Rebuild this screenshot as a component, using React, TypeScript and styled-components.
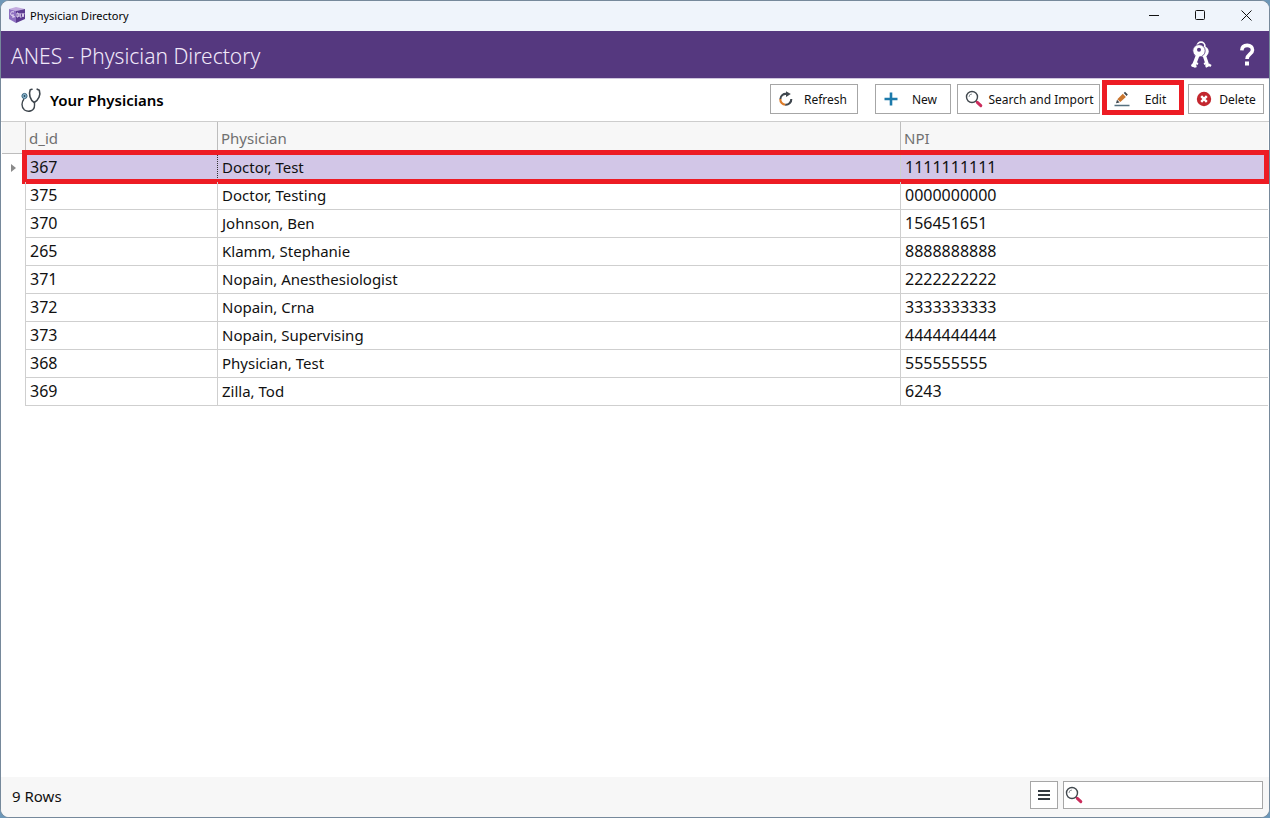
import React from 'react';
import styled, { createGlobalStyle, css } from 'styled-components';

const Global = createGlobalStyle`
  * { box-sizing: border-box; }
  body { margin: 0; background: #6d97b8; color: #111; font-family: "Segoe UI", "Noto Sans", sans-serif; }
  button, input { font-family: inherit; }
`;

const Window = styled.div`
  display: flex;
  flex-direction: column;
  min-height: 100vh;
  border: 1px solid #76899b;
  border-radius: 9px;
  background: #fff;
  overflow: hidden;
`;

const TitleBar = styled.header`
  display: flex;
  align-items: center;
  height: 30px;
  padding: 0 0 2px 7px;
  background: #eff4fb;
  font-size: 11px;
  color: #000;
`;

const TitleText = styled.span`
  flex: 1;
  margin-left: 4px;
`;

const CaptionButton = styled.button`
  display: flex;
  align-items: center;
  justify-content: center;
  width: 46px;
  height: 28px;
  padding: 0;
  border: 0;
  background: transparent;
`;

const Banner = styled.div`
  display: flex;
  align-items: center;
  height: 48px;
  padding: 0 14px 0 10px;
  border-bottom: 1px solid #cfc5de;
  background: #55387f;
  color: #f1e8fa;
`;

const BannerTitle = styled.h1`
  flex: 1;
  margin: 0;
  padding-top: 3px;
  font-size: 21px;
  font-weight: 300;
`;

const BannerButton = styled.button`
  display: flex;
  padding: 0;
  margin-left: 27px;
  border: 0;
  background: transparent;
`;

const Toolbar = styled.div`
  display: flex;
  align-items: center;
  gap: 6px;
  height: 43px;
  padding: 0 5px 2px 18px;
  border-bottom: 1px solid #cdcdcd;
`;

const Section = styled.div`
  display: flex;
  flex: 1;
  align-items: center;
  gap: 8px;
  padding-top: 2px;
`;

const SectionTitle = styled.h2`
  margin: 0;
  font-size: 15px;
  font-weight: 600;
  color: #000;
`;

const ToolButton = styled.button<{ $width: number; $apart?: boolean; $marked?: boolean }>`
  position: relative;
  display: flex;
  align-items: center;
  flex: none;
  width: ${(p) => p.$width}px;
  height: 30px;
  margin-left: ${(p) => (p.$apart ? 11 : 0)}px;
  padding: 0 0 0 7px;
  border: 1px solid #a6a6a6;
  background: #fff;
  color: #111;
  font-size: 12px;
  white-space: nowrap;
  svg { flex: none; }
  ${(p) =>
    p.$marked &&
    css`
      &::after {
        content: '';
        position: absolute;
        inset: -5px -3px -2px -5px;
        border: 5px solid #ed1c24;
      }
    `}
`;

const ToolLabel = styled.span`
  flex: 1;
  text-align: center;
`;

const Grid = styled.main`
  flex: 1;
  padding: 0 1px;
`;

const Table = styled.table`
  width: 100%;
  table-layout: fixed;
  border-collapse: separate;
  border-spacing: 0;
  font-size: 15px;
`;

const Col = styled.col<{ $width?: number }>`
  width: ${(p) => (p.$width ? `${p.$width}px` : 'auto')};
`;

const HeadRow = styled.tr`
  height: 32px;
  background: #f7f7f7;
  color: #707070;
`;

const Head = styled.th`
  padding: 0 0 0 3px;
  border-left: 1px solid #bdbdbd;
  border-bottom: 1px solid #bdbdbd;
  font-weight: 400;
  text-align: left;
`;

const Corner = styled.td`
  padding: 0;
  border-bottom: 1px solid #bdbdbd;
`;

const Indicator = styled.td`
  padding: 0 0 0 9px;
  line-height: 0;
`;

const Cell = styled.td<{ $focus?: boolean; $numeric?: boolean }>`
  position: relative;
  padding: 0 0 2px 4px;
  border-left: 1px ${(p) => (p.$focus ? 'dotted #333' : 'solid #cfcfcf')};
  border-bottom: 1px solid #cfcfcf;
  font-size: ${(p) => (p.$numeric ? 16 : 15)}px;
  line-height: 20px;
`;

const Row = styled.tr<{ $selected?: boolean }>`
  height: 28px;
  ${(p) =>
    p.$selected &&
    css`
      ${Cell} { background: #d2c6e7; }
      ${Cell}::after {
        content: '';
        position: absolute;
        inset: -4px -1px -3px -4px;
        border: solid #ed1c24;
        border-width: 5px 0;
        pointer-events: none;
      }
      ${Cell}:nth-child(2)::after { border-left-width: 5px; }
      ${Cell}:last-child::after { border-right-width: 5px; }
    `}
`;

const Footer = styled.footer`
  display: flex;
  align-items: center;
  height: 40px;
  padding: 0 6px 4px 11px;
  background: #f7f7f7;
  font-size: 15px;
`;

const RowCount = styled.span`
  flex: 1;
  padding-top: 2px;
`;

const MenuButton = styled.button`
  display: flex;
  align-items: center;
  justify-content: center;
  width: 28px;
  height: 28px;
  padding: 0;
  border: 1px solid #a6a6a6;
  background: #fff;
`;

const SearchBox = styled.label`
  display: flex;
  align-items: center;
  width: 200px;
  height: 28px;
  margin-left: 5px;
  padding-left: 1px;
  border: 1px solid #a6a6a6;
  background: #fff;
`;

const SearchInput = styled.input`
  flex: 1;
  min-width: 0;
  height: 24px;
  border: 0;
  outline: 0;
  background: transparent;
  font-size: 15px;
`;

const AppIcon = () => (
  <svg width="18" height="18" viewBox="0 0 18 18" aria-hidden="true">
    <path d="M1 3 8 1l9 2-9 2z" fill="#c3abdf" />
    <path d="M1 3 8 5v12l-7-4z" fill="#8d6fc0" />
    <path d="M8 5l9-2v10l-9 4z" fill="#5b3a90" />
    <path d="M6 6C3 5 2 7 3 9c1 1 3 1 4 2M5 8v4" stroke="#e8ddf5" fill="none" />
    <path d="M9 7v4M9 7h1l1 2-1 2H9M12 7v4h1.500M12 9h1M14 7l1 4 1-4" stroke="#e8ddf5" fill="none" />
  </svg>
);

const StethoscopeIcon = () => (
  <svg width="23" height="26" viewBox="0 0 23 26" fill="none" stroke="#3f474e" aria-hidden="true">
    <circle cx="5.500" cy="9" r="2.600" fill="#8fb8cf" stroke="#3d6780" />
    <circle cx="5.500" cy="9" r=".9" fill="#24485d" stroke="none" />
    <path d="M5 12c-2.500 3-3 8 .5 11 4 2.500 10 1 10-4.500v-3" strokeWidth="1.400" />
    <path d="M13 2.200 11.200 2.700C9.500 7 11 13 15.200 15.500 19.500 13 22 8 20.300 3.200L18.200 2.200" strokeWidth="1.600" strokeLinejoin="round" strokeLinecap="round" />
  </svg>
);

const KeysIcon = () => (
  <svg width="22" height="28" viewBox="0 0 22 28" fill="none" aria-hidden="true">
    <circle cx="11" cy="5" r="3.900" stroke="#fff" strokeWidth="1.600" />
    <circle cx="13.500" cy="10.500" r="5.200" fill="#fff" />
    <path d="M13.500 12 18 25.500" stroke="#fff" strokeWidth="3.400" />
    <path d="M16.500 22l-2.500 1M18 24.500l-2.500 1.200M18.500 23.500l2.500 1.500" stroke="#fff" strokeWidth="2.400" />
    <path d="M9 12 3.500 25.500" stroke="#55387f" strokeWidth="5" />
    <circle cx="9" cy="9.800" r="6.200" fill="#fff" stroke="#55387f" strokeWidth=".8" />
    <path d="M8.200 13 3.200 26" stroke="#fff" strokeWidth="3.600" />
    <path d="M4.500 21.500l3.500 1.500M3.500 24.500l3 1.200M3.500 23.500l-2 1.500" stroke="#fff" strokeWidth="2.200" />
    <circle cx="9" cy="8.800" r="2" fill="#55387f" />
  </svg>
);

const HelpIcon = () => (
  <svg width="16" height="24" viewBox="0 0 16 24" fill="none" aria-hidden="true">
    <path d="M2.800 7.300C3 3.800 5.200 2.400 8.200 2.400c3.300 0 5.300 1.700 5.300 4.500 0 4.300-5.500 4.400-5.500 9.100" stroke="#fff" strokeWidth="3.600" />
    <rect x="6" y="18.500" width="4" height="4" fill="#fff" />
  </svg>
);

const RefreshIcon = () => (
  <svg width="16" height="16" viewBox="0 0 16 16" fill="none" strokeWidth="2.100" aria-hidden="true">
    <path d="M9 3A5.400 5.400 0 0 0 2.300 8.200" stroke="#3f474e" />
    <path d="M2.300 8A5.400 5.400 0 0 0 7.500 13.700" stroke="#dd7b28" />
    <path d="M7.300 13.700A5.500 5.500 0 0 0 13.300 8" stroke="#3f474e" />
    <path d="M8 .300v5.800L12.800 3z" fill="#3f474e" />
  </svg>
);

const PlusIcon = () => (
  <svg width="16" height="16" viewBox="0 0 16 16" aria-hidden="true">
    <path d="M8 1.500v13M1.500 8h13" stroke="#1c7aab" strokeWidth="2.600" />
  </svg>
);

const MagnifierIcon = () => (
  <svg width="18" height="18" viewBox="0 0 18 18" fill="none" aria-hidden="true">
    <circle cx="7" cy="7" r="5.500" stroke="#41484e" strokeWidth="1.400" />
    <path d="M4 7a3 3 0 0 1 3-3" stroke="#8d9499" />
    <path d="M11 11l1.500 1.500" stroke="#41484e" strokeWidth="1.500" />
    <path d="M12.300 12.300l3.500 3.400" stroke="#cb2c5c" strokeWidth="3" strokeLinecap="round" />
  </svg>
);

const PencilIcon = () => (
  <svg width="16" height="16" viewBox="0 0 16 16" aria-hidden="true">
    <path d="M2 12.300 3 8.800l2.600 2.600z" fill="#3f474e" />
    <path d="M3.300 8.300 8.800 2.800l3.100 3.100-5.600 5.200z" fill="#c9752f" />
    <path d="M9.700 2 11 .800l2.800 2.800-1.200 1.400z" fill="#3f474e" />
    <path d="M.5 14.500h15" stroke="#54707f" strokeWidth="1.300" />
  </svg>
);

const DeleteIcon = () => (
  <svg width="16" height="16" viewBox="0 0 16 16" aria-hidden="true">
    <circle cx="8" cy="8" r="7.200" fill="#c3272f" />
    <path d="M5.200 5.200l5.600 5.600M10.800 5.200l-5.600 5.600" stroke="#fff" strokeWidth="2.400" />
  </svg>
);

const MenuIcon = () => (
  <svg width="12" height="12" viewBox="0 0 12 12" aria-hidden="true">
    <path d="M0 2h12M0 6h12M0 10h12" stroke="#333a40" strokeWidth="2" />
  </svg>
);

const physicians = [
  ['367', 'Doctor, Test', '1111111111'],
  ['375', 'Doctor, Testing', '0000000000'],
  ['370', 'Johnson, Ben', '156451651'],
  ['265', 'Klamm, Stephanie', '8888888888'],
  ['371', 'Nopain, Anesthesiologist', '2222222222'],
  ['372', 'Nopain, Crna', '3333333333'],
  ['373', 'Nopain, Supervising', '4444444444'],
  ['368', 'Physician, Test', '555555555'],
  ['369', 'Zilla, Tod', '6243'],
];

export default function App() {
  const selected = '367';
  return (
    <>
      <Global />
      <Window>
        <TitleBar>
          <AppIcon />
          <TitleText>Physician Directory</TitleText>
          <CaptionButton aria-label="Minimize">
            <svg width="10" height="10"><path d="M0 5.500h10" stroke="#111" /></svg>
          </CaptionButton>
          <CaptionButton aria-label="Maximize">
            <svg width="10" height="10"><rect x=".5" y=".5" width="9" height="9" rx="1" fill="none" stroke="#111" /></svg>
          </CaptionButton>
          <CaptionButton aria-label="Close">
            <svg width="11" height="11"><path d="M.5.500l10 10M10.500.500l-10 10" stroke="#111" /></svg>
          </CaptionButton>
        </TitleBar>
        <Banner>
          <BannerTitle>ANES - Physician Directory</BannerTitle>
          <BannerButton aria-label="Credentials"><KeysIcon /></BannerButton>
          <BannerButton aria-label="Help"><HelpIcon /></BannerButton>
        </Banner>
        <Toolbar>
          <Section>
            <StethoscopeIcon />
            <SectionTitle>Your Physicians</SectionTitle>
          </Section>
          <ToolButton $width={88}><RefreshIcon /><ToolLabel>Refresh</ToolLabel></ToolButton>
          <ToolButton $width={76} $apart><PlusIcon /><ToolLabel>New</ToolLabel></ToolButton>
          <ToolButton $width={143}><MagnifierIcon /><ToolLabel>Search and Import</ToolLabel></ToolButton>
          <ToolButton $width={76} $marked><PencilIcon /><ToolLabel>Edit</ToolLabel></ToolButton>
          <ToolButton $width={76}><DeleteIcon /><ToolLabel>Delete</ToolLabel></ToolButton>
        </Toolbar>
        <Grid>
          <Table>
            <colgroup>
              <Col $width={23} />
              <Col $width={192} />
              <Col />
              <Col $width={368} />
            </colgroup>
            <thead>
              <HeadRow>
                <Corner />
                <Head scope="col">d_id</Head>
                <Head scope="col">Physician</Head>
                <Head scope="col">NPI</Head>
              </HeadRow>
            </thead>
            <tbody>
              {physicians.map(([id, name, npi]) => (
                <Row key={id} $selected={id === selected}>
                  <Indicator>
                    {id === selected && (
                      <svg width="5" height="8"><path d="M0 0l5 4-5 4z" fill="#8a8a8a" /></svg>
                    )}
                  </Indicator>
                  <Cell $numeric>{id}</Cell>
                  <Cell $focus={id === selected}>{name}</Cell>
                  <Cell $numeric>{npi}</Cell>
                </Row>
              ))}
            </tbody>
          </Table>
        </Grid>
        <Footer>
          <RowCount>{physicians.length} Rows</RowCount>
          <MenuButton aria-label="Menu"><MenuIcon /></MenuButton>
          <SearchBox>
            <MagnifierIcon />
            <SearchInput type="text" aria-label="Search" />
          </SearchBox>
        </Footer>
      </Window>
    </>
  );
}
